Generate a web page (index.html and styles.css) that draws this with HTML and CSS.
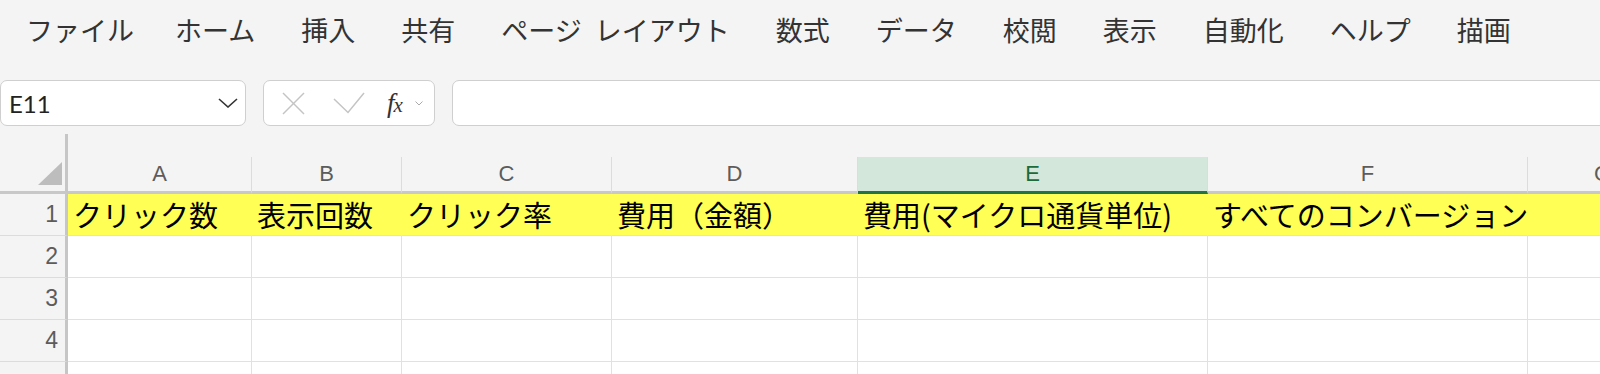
FILE: index.html
```html
<!DOCTYPE html>
<html lang="ja">
<head>
    <meta charset="UTF-8">
    <meta name="viewport" content="width=device-width, initial-scale=1.0">
    <title>Excel - シート</title>
    <link rel="stylesheet" href="styles.css">
</head>
<body>
    <div class="menu">
        <span class="menu-item menu-file">ファイル</span>
        <span class="menu-item">ホーム</span>
        <span class="menu-item">挿入</span>
        <span class="menu-item">共有</span>
        <span class="menu-item menu-layout">ページ レイアウト</span>
        <span class="menu-item">数式</span>
        <span class="menu-item">データ</span>
        <span class="menu-item">校閲</span>
        <span class="menu-item">表示</span>
        <span class="menu-item">自動化</span>
        <span class="menu-item">ヘルプ</span>
        <span class="menu-item">描画</span>
    </div>

    <div class="formula-bar">
        <div class="name-box">
            <span class="name-text">E11</span>
            <svg class="name-chevron" width="20" height="10" viewBox="0 0 20 10">
                <polyline points="1,1 10,9 19,1" fill="none" stroke="#333" stroke-width="1.6"/>
            </svg>
        </div>
        <div class="fx-box">
            <svg class="icon-cancel" width="23" height="23" viewBox="0 0 23 23">
                <line x1="1" y1="1" x2="22" y2="22" stroke="#c4c4c4" stroke-width="1.5"/>
                <line x1="22" y1="1" x2="1" y2="22" stroke="#c4c4c4" stroke-width="1.5"/>
            </svg>
            <svg class="icon-enter" width="32" height="22" viewBox="0 0 32 22">
                <polyline points="1,7 15,20.5 31,1" fill="none" stroke="#c4c4c4" stroke-width="1.5"/>
            </svg>
            <span class="fx"><span class="fx-f">f</span><span class="fx-x">x</span></span>
            <svg class="fx-chevron" width="8" height="5" viewBox="0 0 8 5">
                <polyline points="0.5,0.5 4,4 7.5,0.5" fill="none" stroke="#aaa" stroke-width="1"/>
            </svg>
        </div>
        <div class="formula-input"></div>
    </div>

    <div class="sheet">
        <div class="header-row">
            <div class="corner">
                <svg width="24" height="23" viewBox="0 0 24 23">
                    <polygon points="24,0 24,23 0,23" fill="#bdbdbd"/>
                </svg>
            </div>
            <div class="col-head col-a">A</div>
            <div class="col-head col-b">B</div>
            <div class="col-head col-c">C</div>
            <div class="col-head col-d">D</div>
            <div class="col-head col-e selected">E</div>
            <div class="col-head col-f">F</div>
            <div class="col-head col-g">G</div>
        </div>

        <div class="row row-filled">
            <div class="row-head">1</div>
            <div class="cell col-a">クリック数</div>
            <div class="cell col-b">表示回数</div>
            <div class="cell col-c">クリック率</div>
            <div class="cell col-d">費用（金額）</div>
            <div class="cell col-e">費用(マイクロ通貨単位)</div>
            <div class="cell col-f">すべてのコンバージョン</div>
            <div class="cell col-g"></div>
        </div>
        <div class="row">
            <div class="row-head">2</div>
            <div class="cell col-a"></div>
            <div class="cell col-b"></div>
            <div class="cell col-c"></div>
            <div class="cell col-d"></div>
            <div class="cell col-e"></div>
            <div class="cell col-f"></div>
            <div class="cell col-g"></div>
        </div>
        <div class="row">
            <div class="row-head">3</div>
            <div class="cell col-a"></div>
            <div class="cell col-b"></div>
            <div class="cell col-c"></div>
            <div class="cell col-d"></div>
            <div class="cell col-e"></div>
            <div class="cell col-f"></div>
            <div class="cell col-g"></div>
        </div>
        <div class="row">
            <div class="row-head">4</div>
            <div class="cell col-a"></div>
            <div class="cell col-b"></div>
            <div class="cell col-c"></div>
            <div class="cell col-d"></div>
            <div class="cell col-e"></div>
            <div class="cell col-f"></div>
            <div class="cell col-g"></div>
        </div>
        <div class="row">
            <div class="row-head"></div>
            <div class="cell col-a"></div>
            <div class="cell col-b"></div>
            <div class="cell col-c"></div>
            <div class="cell col-d"></div>
            <div class="cell col-e"></div>
            <div class="cell col-f"></div>
            <div class="cell col-g"></div>
        </div>
    </div>
</body>
</html>
```

FILE: styles.css
```css
* {
    box-sizing: border-box;
}
body {
    margin: 0;
    background-color: #f4f4f4;
    font-family: "Noto Sans CJK JP", sans-serif;
    overflow: hidden;
}

/* ribbon tabs */
.menu {
    display: flex;
    align-items: center;
    gap: 46px;
    height: 62px;
    padding: 0 0 3px 26px;
    font-size: 27px;
    line-height: 1;
    color: #333;
    white-space: nowrap;
}
.menu-file {
    margin-right: -5px;
}
.menu-layout {
    word-spacing: 7px;
}

/* formula bar */
.formula-bar {
    display: flex;
    gap: 17px;
    height: 46px;
    margin-top: 18px;
}
.name-box,
.fx-box,
.formula-input {
    background-color: #fff;
    border: 1px solid #cfcfcf;
    border-radius: 7px;
}
.name-box {
    display: flex;
    align-items: center;
    justify-content: space-between;
    width: 246px;
    padding: 0 7px 0 8px;
}
.name-text {
    font-family: Lato, "Open Sans", sans-serif;
    font-size: 24px;
    color: #222;
}
.fx-box {
    display: flex;
    align-items: center;
    width: 172px;
    padding-left: 18px;
}
.icon-enter {
    margin-left: 28px;
}
.fx {
    margin-left: 22px;
    font-family: "Liberation Serif", serif;
    font-style: italic;
    color: #333;
    line-height: 1;
}
.fx-f {
    font-size: 27px;
}
.fx-x {
    font-size: 21px;
    margin-left: -1px;
}
.fx-chevron {
    margin-left: 12px;
}
.formula-input {
    flex: 1;
    margin-right: -20px;
}

/* sheet grid */
.sheet {
    margin-top: 8px;
}
.header-row {
    display: flex;
    align-items: flex-end;
}
.corner {
    display: flex;
    align-items: flex-end;
    justify-content: flex-end;
    width: 68px;
    height: 60px;
    flex-shrink: 0;
    padding: 0 3px 6px 0;
    border-right: 3px solid #c6c6c6;
    border-bottom: 3px solid #c8c8c8;
}
.col-head {
    display: flex;
    align-items: center;
    justify-content: center;
    height: 37px;
    border-right: 1px solid #dcdcdc;
    border-bottom: 3px solid #c8c8c8;
    font-family: "Liberation Sans", Arial, sans-serif;
    font-size: 22px;
    color: #5c5c5c;
}
.col-head.selected {
    background-color: #d3e8da;
    color: #1d6a3b;
    border-bottom-color: #217346;
}

.col-a { width: 184px; flex-shrink: 0; }
.col-b { width: 150px; flex-shrink: 0; }
.col-c { width: 210px; flex-shrink: 0; }
.col-d { width: 246px; flex-shrink: 0; }
.col-e { width: 350px; flex-shrink: 0; }
.col-f { width: 320px; flex-shrink: 0; }
.col-g { width: 150px; flex-shrink: 0; }

.row {
    display: flex;
    height: 42px;
}
.row-head {
    width: 68px;
    flex-shrink: 0;
    padding-right: 7px;
    background-color: #f4f4f4;
    border-right: 3px solid #c6c6c6;
    border-bottom: 1px solid #dcdcdc;
    text-align: right;
    font-family: "Liberation Sans", Arial, sans-serif;
    font-size: 23px;
    line-height: 41px;
    color: #5c5c5c;
}
.cell {
    background-color: #fff;
    border-right: 1px solid #e1e1e1;
    border-bottom: 1px solid #e1e1e1;
    padding-left: 5px;
    font-size: 29px;
    line-height: 41px;
    color: #000;
    white-space: nowrap;
}
.row-filled {
    background-color: #ffff55;
}
.row-filled .cell {
    background-color: transparent;
    border-right-color: transparent;
}
```
